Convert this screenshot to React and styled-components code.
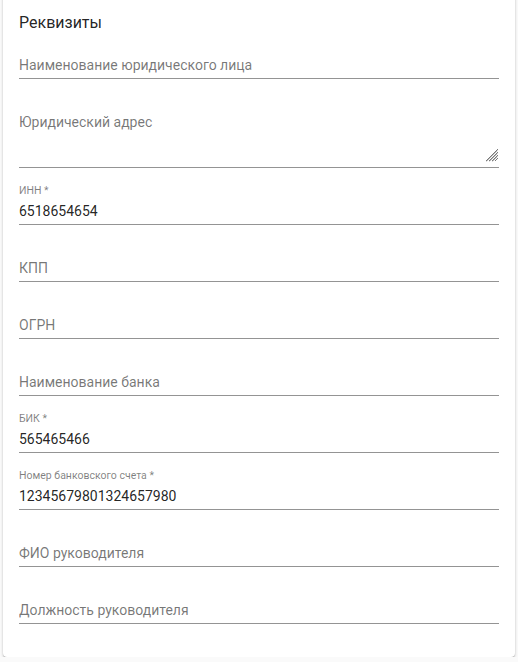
import React from "react";
import styled, { createGlobalStyle } from "styled-components";

const Global = createGlobalStyle`
  html, body { margin: 0; padding: 0; background: #fafafa; }
  body { font-family: Roboto, "Liberation Sans", sans-serif; overflow: hidden; }
  * { box-sizing: border-box; }
`;

const Card = styled.div`
  margin: -8px 3px 0 3px;
  background: #fff;
  border-radius: 4px;
  box-shadow: 0 1px 3px 0 rgba(0,0,0,0.2), 0 1px 1px 0 rgba(0,0,0,0.14), 0 2px 1px -1px rgba(0,0,0,0.12);
  padding: 19px 16px 33px 16px;
  display: flex;
  flex-direction: column;
  gap: 16px;
`;

const Title = styled.div`
  font-size: 16px;
  line-height: 24px;
  color: rgba(0,0,0,0.87);
  margin-bottom: -13px;
`;

const Field = styled.label`
  display: flex;
  flex-direction: column;
  position: relative;
`;

const SmallLabel = styled.span`
  font-size: 10.5px;
  line-height: 14px;
  height: 16px;
  color: rgba(0,0,0,0.5);
`;

const inputCss = `
  font-family: inherit;
  font-size: 14px;
  line-height: 16px;
  color: rgba(0,0,0,0.87);
  border: none;
  border-bottom: 1px solid rgba(0,0,0,0.42);
  padding: 3px 0 5px 0;
  margin: 0;
  outline: none;
  background: transparent;
  width: 100%;
  &::placeholder { color: rgba(0,0,0,0.54); opacity: 1; }
`;

const Input = styled.input`
  ${inputCss}
  height: 25px;
  margin-top: ${(p) => (p.$shrunk ? "0" : "16px")};
`;

const TextArea = styled.textarea`
  ${inputCss}
  margin-top: 16px;
  height: 57px;
  resize: none;
  display: block;
`;

const Grip = styled.svg`
  position: absolute;
  right: 1px;
  bottom: 6px;
  width: 14px;
  height: 14px;
  pointer-events: none;
`;

const ResizeGrip = () => (
  <Grip viewBox="0 0 14 14">
    <g stroke="#7a7a7a" strokeWidth="1" shapeRendering="crispEdges">
      <line x1="13.5" y1="1.5" x2="1.5" y2="13.5" />
      <line x1="13.5" y1="4.5" x2="4.5" y2="13.5" />
      <line x1="13.5" y1="7.5" x2="7.5" y2="13.5" />
      <line x1="13.5" y1="10.5" x2="10.5" y2="13.5" />
    </g>
    <g stroke="#b8b8b8" strokeWidth="1">
      <line x1="13.5" y1="2.5" x2="2.5" y2="13.5" />
      <line x1="13.5" y1="5.5" x2="5.5" y2="13.5" />
      <line x1="13.5" y1="8.5" x2="8.5" y2="13.5" />
    </g>
  </Grip>
);

const fields = [
  { label: "Наименование юридического лица" },
  { label: "Юридический адрес", multiline: true },
  { label: "ИНН *", value: "6518654654" },
  { label: "КПП" },
  { label: "ОГРН" },
  { label: "Наименование банка" },
  { label: "БИК *", value: "565465466" },
  { label: "Номер банковского счета *", value: "12345679801324657980" },
  { label: "ФИО руководителя" },
  { label: "Должность руководителя" },
];

export default function App() {
  return (
    <>
      <Global />
      <Card>
        <Title>Реквизиты</Title>
        {fields.map((f) => (
          <Field key={f.label}>
            {f.value !== undefined ? (
              <>
                <SmallLabel>{f.label}</SmallLabel>
                <Input $shrunk value={f.value} readOnly />
              </>
            ) : f.multiline ? (
              <>
                <TextArea rows={3} placeholder={f.label} readOnly />
                <ResizeGrip />
              </>
            ) : (
              <Input placeholder={f.label} readOnly />
            )}
          </Field>
        ))}
      </Card>
    </>
  );
}
